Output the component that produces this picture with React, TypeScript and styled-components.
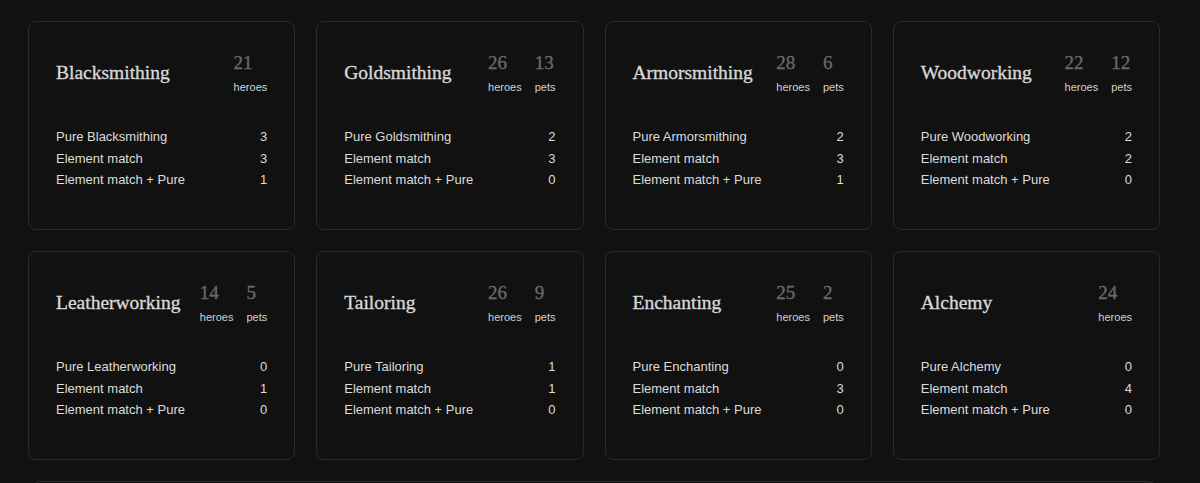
import React from "react";
import styled, { createGlobalStyle } from "styled-components";

const Global = createGlobalStyle`
  html, body { margin: 0; padding: 0; background: #111111; }
  body { font-family: "Liberation Sans", Arial, sans-serif; color: #d4d4d4; overflow: hidden; }
`;

const Page = styled.div`
  width: 1132px;
  padding: 21px 0 0 28px;
  display: flex;
  flex-direction: column;
  gap: 21px;
`;

const Grid = styled.div`
  display: grid;
  grid-template-columns: repeat(4, 1fr);
  gap: 21px;
`;

const Card = styled.section`
  box-sizing: border-box;
  height: 209px;
  border: 1px solid #2a2a2a;
  border-radius: 8px;
  background: #111111;
  padding: 29px 27px 0 27px;
  display: flex;
  flex-direction: column;
`;

const Header = styled.div`
  display: flex;
  justify-content: space-between;
  align-items: center;
  height: 43px;
`;

const Title = styled.h2`
  margin: 0;
  font-family: "Liberation Serif", "Times New Roman", serif;
  font-weight: 400;
  font-size: 19.5px;
  color: #d8d8d8;
  -webkit-text-stroke: 0.35px #d8d8d8;
`;

const Stats = styled.div`
  display: flex;
  gap: 13px;
`;

const Stat = styled.div`
  display: flex;
  flex-direction: column;
  align-items: flex-start;
`;

const StatValue = styled.span`
  font-family: "Liberation Serif", "Times New Roman", serif;
  font-size: 19px;
  line-height: 24px;
  color: #6a6a6a;
  -webkit-text-stroke: 0.35px #6a6a6a;
`;

const StatLabel = styled.span`
  margin-top: 6px;
  font-size: 11px;
  line-height: 13px;
  color: #d2d2d2;
`;

const Rows = styled.div`
  margin-top: 32px;
  display: flex;
  flex-direction: column;
`;

const Row = styled.div`
  display: flex;
  justify-content: space-between;
  font-size: 13px;
  line-height: 21.5px;
  color: #dcdcdc;
`;

const Footer = styled.div`
  margin: 0 4px;
  height: 40px;
  border: 1px solid #2a2a2a;
  border-bottom: none;
  border-radius: 8px 8px 0 0;
`;

type Craft = {
  name: string;
  heroes: number;
  pets?: number;
  pure: number;
  element: number;
  both: number;
};

const crafts: Craft[] = [
  { name: "Blacksmithing", heroes: 21, pure: 3, element: 3, both: 1 },
  { name: "Goldsmithing", heroes: 26, pets: 13, pure: 2, element: 3, both: 0 },
  { name: "Armorsmithing", heroes: 28, pets: 6, pure: 2, element: 3, both: 1 },
  { name: "Woodworking", heroes: 22, pets: 12, pure: 2, element: 2, both: 0 },
  { name: "Leatherworking", heroes: 14, pets: 5, pure: 0, element: 1, both: 0 },
  { name: "Tailoring", heroes: 26, pets: 9, pure: 1, element: 1, both: 0 },
  { name: "Enchanting", heroes: 25, pets: 2, pure: 0, element: 3, both: 0 },
  { name: "Alchemy", heroes: 24, pure: 0, element: 4, both: 0 },
];

export default function App() {
  return (
    <>
      <Global />
      <Page>
        <Grid>
          {crafts.map((c) => (
            <Card key={c.name}>
              <Header>
                <Title>{c.name}</Title>
                <Stats>
                  <Stat>
                    <StatValue>{c.heroes}</StatValue>
                    <StatLabel>heroes</StatLabel>
                  </Stat>
                  {c.pets !== undefined && (
                    <Stat>
                      <StatValue>{c.pets}</StatValue>
                      <StatLabel>pets</StatLabel>
                    </Stat>
                  )}
                </Stats>
              </Header>
              <Rows>
                <Row>
                  <span>Pure {c.name}</span>
                  <span>{c.pure}</span>
                </Row>
                <Row>
                  <span>Element match</span>
                  <span>{c.element}</span>
                </Row>
                <Row>
                  <span>Element match + Pure</span>
                  <span>{c.both}</span>
                </Row>
              </Rows>
            </Card>
          ))}
        </Grid>
        <Footer />
      </Page>
    </>
  );
}
